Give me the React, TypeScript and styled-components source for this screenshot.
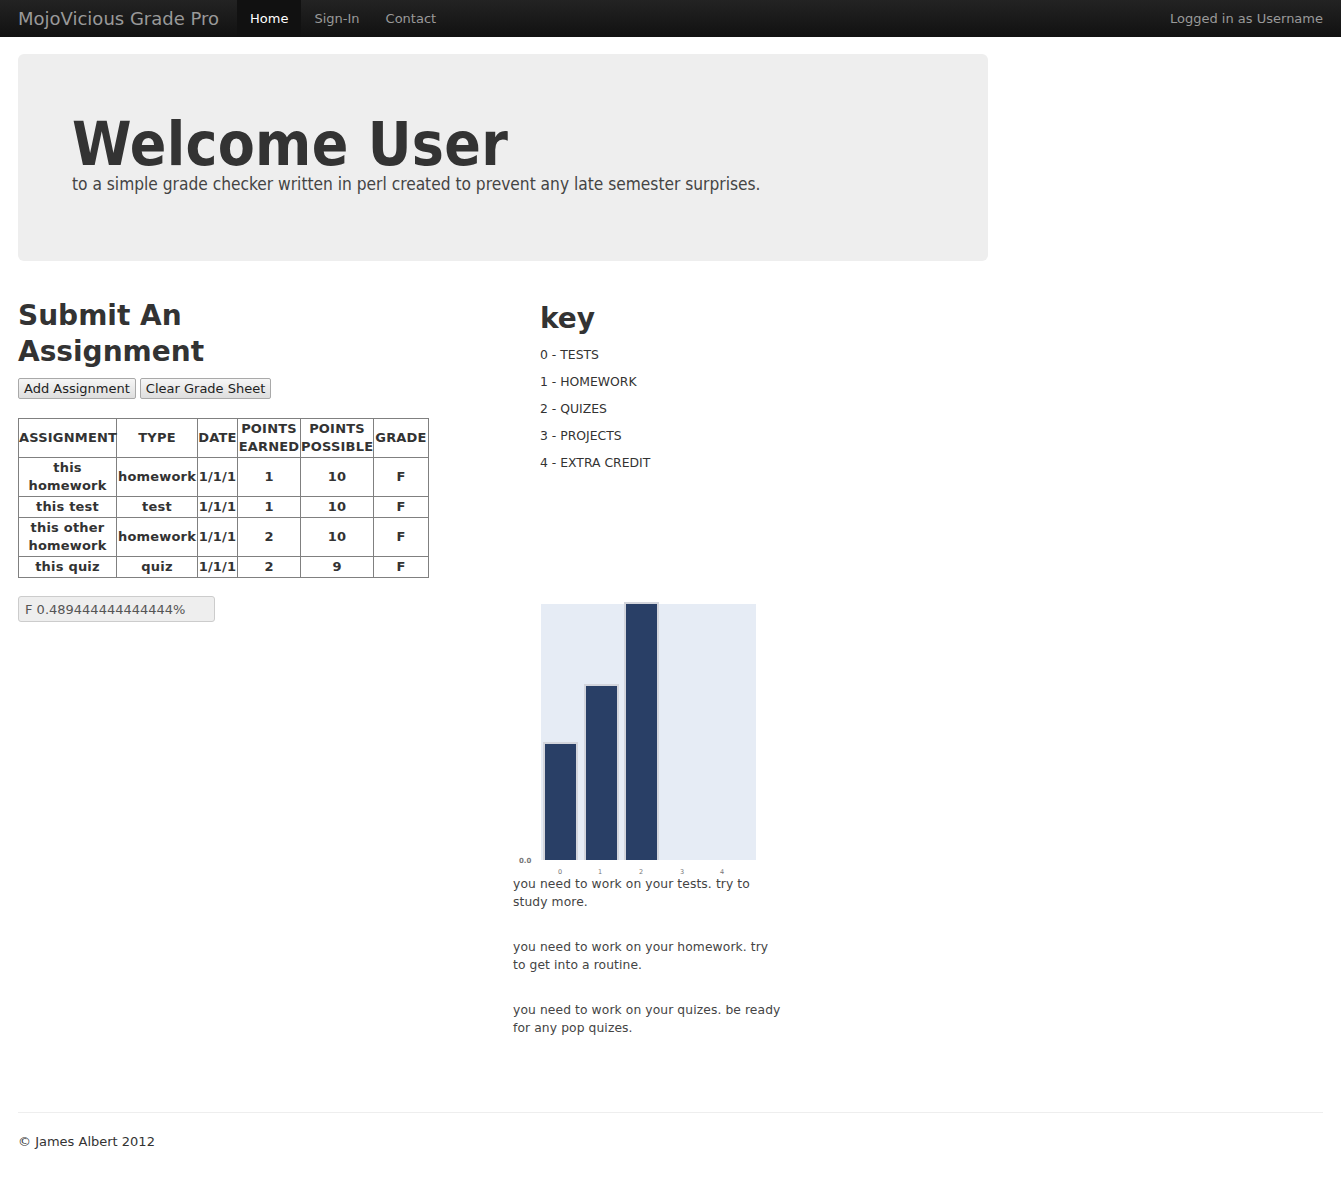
import React from "react";
import styled, { createGlobalStyle } from "styled-components";

const Global = createGlobalStyle`
  html, body { margin: 0; padding: 0; background: #fff; }
  body {
    font-family: "DejaVu Sans", Verdana, sans-serif;
    font-size: 13px;
    line-height: 18px;
    color: #333;
  }
  * { box-sizing: border-box; }
`;

const NavBar = styled.div`
  height: 37px;
  background: linear-gradient(#232323, #111111);
  display: flex;
  align-items: stretch;
  padding: 0 18px;
`;

const Brand = styled.a`
  font-size: 18px;
  color: #999;
  display: flex;
  align-items: center;
  margin-right: 18px;
  text-decoration: none;
`;

const NavLink = styled.a<{ $active?: boolean }>`
  display: flex;
  align-items: center;
  padding: 0 13px;
  font-size: 13px;
  color: ${(p) => (p.$active ? "#fff" : "#999")};
  background: ${(p) => (p.$active ? "#111" : "transparent")};
  text-decoration: none;
`;

const NavRight = styled.div`
  margin-left: auto;
  display: flex;
  align-items: center;
  font-size: 13px;
  color: #999;
`;

const Container = styled.div`
  padding: 17px 18px 0;
`;

const Hero = styled.div`
  width: 970px;
  background: #eeeeee;
  border-radius: 6px;
  padding: 60px 54px 60px;
  margin-bottom: 37px;
`;

const HeroTitle = styled.h1`
  margin: 0;
  font-family: "DejaVu Sans Condensed", "DejaVu Sans", sans-serif;
  font-weight: bold;
  font-size: 60px;
  line-height: 60px;
  letter-spacing: 0.3px;
  color: #333;
`;

const HeroText = styled.p`
  margin: 0 0 6px;
  font-family: "DejaVu Sans Condensed", "DejaVu Sans", sans-serif;
  font-weight: 200;
  font-size: 17.2px;
  line-height: 21px;
  color: #444;
`;

const Row = styled.div`
  display: grid;
  grid-template-columns: 522px 1fr;
`;

const Column = styled.div``;

const SectionTitle = styled.h2<{ $narrow?: boolean; $offset?: number }>`
  margin: ${(p) => p.$offset ?? 0}px 0 0;
  font-size: 28px;
  line-height: 36px;
  font-weight: bold;
  color: #333;
  max-width: ${(p) => (p.$narrow ? "240px" : "none")};
`;

const ButtonRow = styled.div`
  display: flex;
  gap: 4px;
  margin-top: 8px;
`;

const Button = styled.button`
  font-family: "DejaVu Sans", sans-serif;
  font-size: 13px;
  height: 21px;
  padding: 0 5px;
  color: #222;
  background: linear-gradient(#f6f6f6, #dedede);
  border: 1px solid #a9a9a9;
  border-radius: 2px;
`;

const Table = styled.table`
  margin-top: 19px;
  border-collapse: collapse;
  table-layout: fixed;
  width: 410px;
  border: 1px solid #222;
`;

const Cell = styled.td`
  border: 1px solid #808080;
  padding: 1px 0;
  text-align: center;
  font-weight: bold;
  font-size: 13px;
  line-height: 18px;
  color: #333;
  letter-spacing: 0.2px;
`;

const HeadCell = styled(Cell).attrs({ as: "th" })``;

const GradeInput = styled.input`
  margin-top: 18px;
  display: block;
  width: 197px;
  height: 26px;
  padding: 0 6px;
  background: #eeeeee;
  border: 1px solid #cccccc;
  border-radius: 3px;
  font-family: "DejaVu Sans", sans-serif;
  font-size: 13px;
  color: #555;
`;

const KeyList = styled.div`
  margin-top: 9px;
`;

const KeyItem = styled.p`
  margin: 0 0 9px;
  font-size: 12.4px;
  line-height: 18px;
  color: #333;
`;

const ChartBlock = styled.div`
  margin-left: -27px;
  width: 272px;
  margin-top: -1px;
`;

const ChartSvg = styled.svg`
  display: block;
  overflow: visible;
`;

const Advice = styled.p`
  margin: 0 0 27px;
  max-width: 269px;
  font-size: 12.3px;
  line-height: 18px;
  color: #444;
  letter-spacing: 0.1px;
`;

const Footer = styled.footer`
  margin-top: 48px;
  border-top: 1px solid #eeeeee;
  padding: 20px 0 36px;
  font-size: 13px;
  line-height: 18px;
  color: #333;
`;

const rows = [
  ["this homework", "homework", "1/1/1", "1", "10", "F"],
  ["this test", "test", "1/1/1", "1", "10", "F"],
  ["this other homework", "homework", "1/1/1", "2", "10", "F"],
  ["this quiz", "quiz", "1/1/1", "2", "9", "F"],
];

const colWidths = [98, 81, 40, 63, 73, 55];

const bars = [
  { x: 32, top: 264 },
  { x: 73, top: 206 },
  { x: 113, top: 124 },
];

const ticks = [47, 87, 128, 169, 209];

function Chart() {
  return (
    <ChartSvg width={272} height={395} viewBox="0 0 272 395">
      <rect x={28} y={124} width={215} height={256} fill="#e6ecf5" />
      {bars.map((b, i) => (
        <g key={i}>
          <rect x={b.x - 2} y={b.top - 2} width={35} height={380 - b.top + 2} fill="#d3d5dc" />
          <rect x={b.x} y={b.top} width={31} height={380 - b.top} fill="#293f66" />
        </g>
      ))}
      <text x={6} y={383} fontSize={7} fontWeight="bold" fill="#777" fontFamily="DejaVu Sans, sans-serif">
        0.0
      </text>
      {ticks.map((t, i) => (
        <text
          key={i}
          x={t}
          y={394}
          fontSize={6.5}
          fill="#777"
          textAnchor="middle"
          fontFamily="DejaVu Sans, sans-serif"
        >
          {i}
        </text>
      ))}
    </ChartSvg>
  );
}

export default function App() {
  return (
    <>
      <Global />
      <NavBar>
        <Brand>MojoVicious Grade Pro</Brand>
        <NavLink $active>Home</NavLink>
        <NavLink>Sign-In</NavLink>
        <NavLink>Contact</NavLink>
        <NavRight>Logged in as Username</NavRight>
      </NavBar>
      <Container>
        <Hero>
          <HeroTitle>Welcome User</HeroTitle>
          <HeroText>
            to a simple grade checker written in perl created to prevent any late semester surprises.
          </HeroText>
        </Hero>
        <Row>
          <Column>
            <SectionTitle $narrow>Submit An Assignment</SectionTitle>
            <ButtonRow>
              <Button>Add Assignment</Button>
              <Button>Clear Grade Sheet</Button>
            </ButtonRow>
            <Table>
              <colgroup>
                {colWidths.map((w, i) => (
                  <col key={i} style={{ width: w }} />
                ))}
              </colgroup>
              <thead>
                <tr>
                  <HeadCell>ASSIGNMENT</HeadCell>
                  <HeadCell>TYPE</HeadCell>
                  <HeadCell>DATE</HeadCell>
                  <HeadCell>
                    POINTS
                    <br />
                    EARNED
                  </HeadCell>
                  <HeadCell>
                    POINTS
                    <br />
                    POSSIBLE
                  </HeadCell>
                  <HeadCell>GRADE</HeadCell>
                </tr>
              </thead>
              <tbody>
                {rows.map((r, i) => (
                  <tr key={i}>
                    {r.map((c, j) => (
                      <Cell key={j}>{c}</Cell>
                    ))}
                  </tr>
                ))}
              </tbody>
            </Table>
            <GradeInput readOnly value="F 0.489444444444444%" />
          </Column>
          <Column>
            <SectionTitle $offset={3}>key</SectionTitle>
            <KeyList>
              <KeyItem>0 - TESTS</KeyItem>
              <KeyItem>1 - HOMEWORK</KeyItem>
              <KeyItem>2 - QUIZES</KeyItem>
              <KeyItem>3 - PROJECTS</KeyItem>
              <KeyItem>4 - EXTRA CREDIT</KeyItem>
            </KeyList>
            <ChartBlock>
              <Chart />
              <Advice>you need to work on your tests. try to study more.</Advice>
              <Advice>you need to work on your homework. try to get into a routine.</Advice>
              <Advice>you need to work on your quizes. be ready for any pop quizes.</Advice>
            </ChartBlock>
          </Column>
        </Row>
        <Footer>© James Albert 2012</Footer>
      </Container>
    </>
  );
}
